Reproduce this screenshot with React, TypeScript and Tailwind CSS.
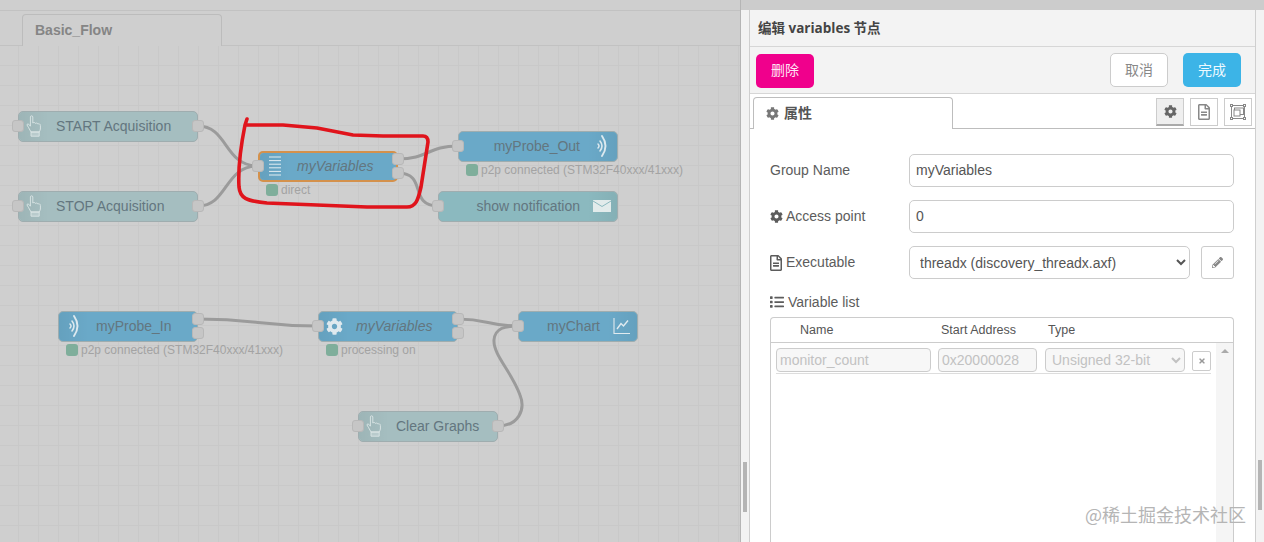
import React from "react";
import { FaCog, FaRegFileAlt, FaList, FaPencilAlt, FaTimes } from "react-icons/fa";

const Hand = () => (
  <svg width="16" height="22" viewBox="0 0 16 22" fill="none" stroke="#dce6e7" strokeWidth="0.9" strokeLinejoin="round">
    <path d="M5 17 L2.5 12.5 L1 10 C1 8.6 2.6 8.6 3.4 10 L4.4 11.2 L4.4 2 C4.4 0.4 6.8 0.4 6.8 2 L6.8 8 C8 7.2 9 7.4 9.4 8.4 C10.4 7.8 11.4 8 11.8 9 C13 8.4 14.4 9 14.4 10.6 L14.4 14 C14.4 15 13.6 16 13.2 17 Z" />
    <rect x="5" y="17" width="8.2" height="4.2" fill="#dce6e7" fillOpacity="0.4" />
  </svg>
);
const Lines = () => (
  <svg width="14" height="20" viewBox="0 0 14 20" className="text-[#e2edf2]">
    {[1, 4.6, 8.2, 11.8, 15.4, 19].map((y) => (
      <rect key={y} x="1" y={y - 0.5} width="12" height="1" fill="currentColor" />
    ))}
  </svg>
);
const Wave = ({ flip }: { flip?: boolean }) => (
  <svg width="12" height="24" viewBox="0 0 12 24" fill="none" stroke="#dce9ef" strokeLinecap="round" className={flip ? "-scale-x-100" : ""}>
    <path d="M2 10 Q4 12 2 14" strokeWidth="1.5" />
    <path d="M4 7 Q8 12 4 17" strokeWidth="1.6" />
    <path d="M6 2 Q13 12 6 22" strokeWidth="1.9" />
  </svg>
);
const Mail = () => (
  <svg width="18" height="12" viewBox="0 0 18 12">
    <rect width="18" height="12" fill="#e2ebeb" />
    <path d="M0 1 L9 6.5 L18 1" fill="none" stroke="#8bb9bf" strokeWidth="1" />
  </svg>
);
const Chart = () => (
  <svg width="18" height="18" viewBox="0 0 18 18" fill="none" stroke="#e0eaef" strokeWidth="1.1">
    <path d="M1 1 V16.5 H17" />
    <path d="M4 12 L8 6.5 L10.5 9 L15 3.5" strokeWidth="1.4" />
  </svg>
);
const Gear = () => <FaCog size={17} className="text-[#dfe9ee]" />;

type NodeProps = {
  x: number; y: number; w: number; label: string; bg: string; icon: React.ReactNode;
  side?: "left" | "right"; italic?: boolean; selected?: boolean;
  portsL?: number[]; portsR?: number[]; status?: string;
};

const Port = ({ top, side }: { top: number; side: "left" | "right" }) => (
  <span
    className={`absolute h-[12px] w-[12px] rounded-[3px] border border-[#b8b8b8] bg-[#c6c6c6] ${side === "left" ? "-left-[6px]" : "-right-[6px]"}`}
    style={{ top: top - 6 }}
  />
);

const FlowNode = ({ x, y, w, label, bg, icon, side = "left", italic, selected, portsL = [], portsR = [], status }: NodeProps) => (
  <div className="absolute h-[31px]" style={{ left: x, top: y - 0.5, width: w }}>
    <div
      className={`relative flex h-full items-center rounded-[5px] ${selected ? "border-2 border-[#d4914c]" : "border border-[#9fadaf]"} ${bg} ${side === "right" ? "flex-row-reverse" : ""}`}
    >
      <div className={`flex h-full w-[30px] shrink-0 items-center justify-center ${side === "left" ? "rounded-l-[5px] bg-linear-to-r" : "rounded-r-[5px] bg-linear-to-l"} from-black/5 to-transparent`}>
        {icon}
      </div>
      <span className={`flex-1 px-[7px] text-[14px] leading-none whitespace-nowrap text-[#63767f] ${side === "right" ? "text-right" : "text-left"} ${italic ? "italic" : ""}`}>{label}</span>
    </div>
    {portsL.map((t) => <Port key={t} top={t} side="left" />)}
    {portsR.map((t) => <Port key={t} top={t} side="right" />)}
    {status && (
      <div className="absolute left-[8px] top-[33px] flex items-center gap-[3px] whitespace-nowrap text-[12px] leading-[12px] text-[#a3a3a3]">
        <span className="h-[12px] w-[12px] rounded-[3px] bg-[#7fae9b]" />
        {status}
      </div>
    )}
  </div>
);

const BTN = "bg-[#a5bec0]";
const BLUE = "bg-[#6aa9c8]";

const Canvas = () => (
  <div className="relative h-full w-[741px] shrink-0 overflow-hidden border-r border-[#b5b5b5] bg-[#cfcfcf]">
    <div className="flex h-[46px] items-end border-y border-[#c2c2c2] border-t-0 pl-[22px]">
      <div className="-mb-px flex h-[32px] w-[200px] items-center rounded-t-[4px] border border-b-0 border-[#bcbcbc] bg-[#cfcfcf] pl-[12px] text-[14px] font-bold text-[#858585]">
        Basic_Flow
      </div>
    </div>
    <div className="absolute inset-x-0 top-[10px] h-px bg-[#c2c2c2]" />
    <div className="absolute inset-x-0 bottom-0 top-[46px] bg-[linear-gradient(to_right,#c9c9c9_1px,transparent_1px),linear-gradient(to_bottom,#c9c9c9_1px,transparent_1px)] bg-[size:20px_20px] bg-[position:-2px_19px]" />
    <svg width="741" height="542" className="absolute left-0 top-0" fill="none" stroke="#9b9b9b" strokeWidth="3">
      <path d="M198 126 C228 126 224 166 258 166" />
      <path d="M198 206 C228 206 224 166 258 166" />
      <path d="M398 159 C428 159 428 146 458 146" />
      <path d="M398 173 C428 173 408 206 438 206" />
      <path d="M198 319 C258 319 258 326 318 326" />
      <path d="M458 319 C488 319 488 326 518 326" />
      <path d="M498 426 C518 426 526 410 520 395 C512 372 493 355 494 340 C495 328 505 326 518 326" />
    </svg>
    <FlowNode x={18} y={111} w={180} label="START Acquisition" bg={BTN} icon={<Hand />} portsL={[15]} portsR={[15]} />
    <FlowNode x={18} y={191} w={180} label="STOP Acquisition" bg={BTN} icon={<Hand />} portsL={[15]} portsR={[15]} />
    <FlowNode x={258} y={151} w={140} label="myVariables" bg={BLUE} icon={<Lines />} italic selected portsL={[15]} portsR={[8, 22]} status="direct" />
    <FlowNode x={458} y={131} w={160} label="myProbe_Out" bg={BLUE} icon={<Wave />} side="right" portsL={[15]} status="p2p connected (STM32F40xxx/41xxx)" />
    <FlowNode x={438} y={191} w={180} label="show notification" bg="bg-[#8bb9bf]" icon={<Mail />} side="right" portsL={[15]} />
    <FlowNode x={58} y={311} w={140} label="myProbe_In" bg={BLUE} icon={<Wave />} portsR={[8, 22]} status="p2p connected (STM32F40xxx/41xxx)" />
    <FlowNode x={318} y={311} w={140} label="myVariables" bg={BLUE} icon={<Gear />} italic portsL={[15]} portsR={[8, 22]} status="processing on" />
    <FlowNode x={518} y={311} w={120} label="myChart" bg={BLUE} icon={<Chart />} side="right" portsL={[15]} />
    <FlowNode x={358} y={411} w={140} label="Clear Graphs" bg={BTN} icon={<Hand />} portsL={[15]} portsR={[15]} />
    <svg width="741" height="542" className="absolute left-0 top-0" fill="none" stroke="#e0141c" strokeWidth="3.6" strokeLinecap="round" strokeLinejoin="round">
      <path d="M247 119 L245 125 C241 145 238 170 239 187 C240 198 246 201 267 203 L317 205 L367 207 L407 207 C416 207 418 200 421 187 L428 142 C428 137 425 136 423 136 L383 136 L353 135 L317 128 L283 125 L247 125" />
    </svg>
  </div>
);

const inputCls = "h-[33px] rounded-[5px] border border-[#ccc] bg-white px-[6px] text-[14px] text-[#555]";
const Label = ({ children, gap }: { children: React.ReactNode; gap: string }) => (
  <div className={`flex w-[139px] shrink-0 items-center text-[14px] text-[#5c5c5c] ${gap}`}>{children}</div>
);

const Panel = () => (
  <div className="mt-[10px] flex h-[532px] w-[507px] shrink-0 flex-col overflow-hidden border-x border-[#cfcfcf] bg-white">
    <div className="flex h-[37px] shrink-0 items-center border-b border-[#d6d6d6] bg-[#f3f3f3] pl-[8px] font-['Open_Sans','Noto_Sans_CJK_SC',sans-serif] text-[13.5px] font-bold text-[#444]">
      编辑 variables 节点
    </div>
    <div className="flex h-[47px] shrink-0 items-center justify-between border-b border-[#d6d6d6] bg-[#f3f3f3] pl-[6px] pr-[14px]">
      <button className="mt-[1px] h-[34px] w-[58px] rounded-[5px] bg-[#f0008c] text-[14px] text-[#ffe6f4]">删除</button>
      <div className="flex gap-[15px]">
        <button className="h-[34px] w-[58px] rounded-[5px] border border-[#ccc] bg-white text-[14px] text-[#888]">取消</button>
        <button className="h-[34px] w-[58px] rounded-[5px] bg-[#3cb4e7] text-[14px] text-[#eefaff]">完成</button>
      </div>
    </div>
    <div className="flex h-[35px] shrink-0 items-end justify-between border-b border-[#bdbdbd] pl-[3px] pr-[3px]">
      <div className="-mb-px flex h-[32px] w-[200px] items-center gap-[5px] rounded-t-[4px] border border-b-0 border-[#bdbdbd] bg-white pl-[12px] text-[14px] font-bold text-[#555]">
        <FaCog size={13} className="text-[#777]" /> 属性
      </div>
      <div className="mb-[2px] flex gap-[6px]">
        <div className="flex h-[28px] w-[28px] items-center justify-center border border-b-2 border-[#ccc] border-b-[#aaa] bg-[#efefef]"><FaCog size={13} className="text-[#666]" /></div>
        <div className="flex h-[28px] w-[28px] items-center justify-center border border-[#ccc]"><FaRegFileAlt size={16} className="text-[#888]" /></div>
        <div className="flex h-[28px] w-[28px] items-center justify-center border border-[#ccc]">
          <svg width="16" height="16" viewBox="0 0 16 16" fill="none" stroke="#888">
            <rect x="1.5" y="1.5" width="13" height="13" />
            <rect x="4.5" y="4" width="9" height="6.5" />
            <rect x="4" y="6" width="6" height="6" fill="white" />
            <g fill="white">
              <rect x="0.5" y="0.5" width="2" height="2" />
              <rect x="13.5" y="0.5" width="2" height="2" />
              <rect x="0.5" y="13.5" width="2" height="2" />
              <rect x="13.5" y="13.5" width="2" height="2" />
            </g>
          </svg>
        </div>
      </div>
    </div>
    <div className="flex flex-1 flex-col pl-[20px] pr-[21px] pt-[25px]">
      <div className="flex items-center">
        <Label gap="gap-[3px]">Group Name</Label>
        <div className={`${inputCls} flex flex-1 items-center`}>myVariables</div>
      </div>
      <div className="mt-[13px] flex items-center">
        <Label gap="gap-[3px]"><FaCog size={13} /> Access point</Label>
        <div className={`${inputCls} flex flex-1 items-center`}>0</div>
      </div>
      <div className="mt-[13px] flex items-center">
        <Label gap="gap-[0px]"><FaRegFileAlt size={16} className="-ml-[2px]" /><span className="ml-[2px]">Executable</span></Label>
        <select className={`${inputCls} w-[282px] text-[14px]`} defaultValue="t">
          <option value="t">threadx (discovery_threadx.axf)</option>
        </select>
        <div className="ml-[11px] flex h-[33px] w-[33px] items-center justify-center rounded-[3px] border border-[#ccc]"><FaPencilAlt size={11} className="text-[#888]" /></div>
      </div>
      <div className="mt-[15px] flex h-[16px] items-center gap-[4px] text-[14px] text-[#5c5c5c]"><FaList size={14} /> Variable list</div>
      <div className="mt-[7px] flex flex-1 flex-col rounded-t-[4px] border border-b-0 border-[#ccc]">
        <div className="flex h-[25px] shrink-0 items-center border-b border-[#ccc] text-[12.5px] text-[#555]">
          <span className="ml-[29px] w-[141px]">Name</span>
          <span className="w-[107px]">Start Address</span>
          <span>Type</span>
        </div>
        <div className="flex flex-1">
          <div className="flex-1 px-[5px] pt-[5px]">
            <div className="flex h-[26px] items-start border-b border-[#ddd] pb-[2px]">
              <div className="flex h-[24px] w-[155px] items-center rounded-[4px] border border-[#ccc] bg-[#f7f7f7] pl-[3px] text-[14px] text-[#c2c2c2]">monitor_count</div>
              <div className="ml-[7px] flex h-[24px] w-[99px] items-center rounded-[4px] border border-[#ccc] bg-[#f7f7f7] pl-[3px] text-[14px] text-[#c2c2c2]">0x20000028</div>
              <select disabled className="ml-[8px] h-[24px] w-[140px] rounded-[4px] border border-[#ccc] bg-[#f7f7f7] px-[2px] text-[14px] text-[#c2c2c2]" defaultValue="u">
                <option value="u">Unsigned 32-bit</option>
              </select>
              <div className="ml-[7px] mt-[3px] flex h-[20px] w-[19px] items-center justify-center rounded-[2px] border border-[#ccc]"><FaTimes size={8} className="text-[#999]" /></div>
            </div>
          </div>
          <div className="relative w-[17px] shrink-0 bg-[#f5f5f5]">
            <span className="absolute left-[5px] top-[6px] h-0 w-0 border-x-[4px] border-b-[4px] border-x-transparent border-b-[#aaa]" />
          </div>
        </div>
      </div>
    </div>
  </div>
);

const Grip = () => <div className="h-[50px] w-[4px] bg-[#b5b5b5]" />;

export default function App() {
  return (
    <div className="relative flex h-[542px] w-[1264px] overflow-hidden bg-[#f3f3f3] font-['Liberation_Sans','Noto_Sans_CJK_SC',sans-serif]">
      <Canvas />
      <div className="flex h-full w-[8px] shrink-0 items-end justify-center pb-[30px]"><Grip /></div>
      <Panel />
      <div className="flex h-full flex-1 items-end justify-center pb-[32px]"><Grip /></div>
      <div className="absolute left-[741px] right-0 top-0 h-[10px] bg-[#cccccc]" />
      <div className="absolute bottom-[16px] right-[18px] font-['Noto_Sans_CJK_SC',sans-serif] text-[18px] leading-[24px] text-[#b5b5b5]">@稀土掘金技术社区</div>
    </div>
  );
}
